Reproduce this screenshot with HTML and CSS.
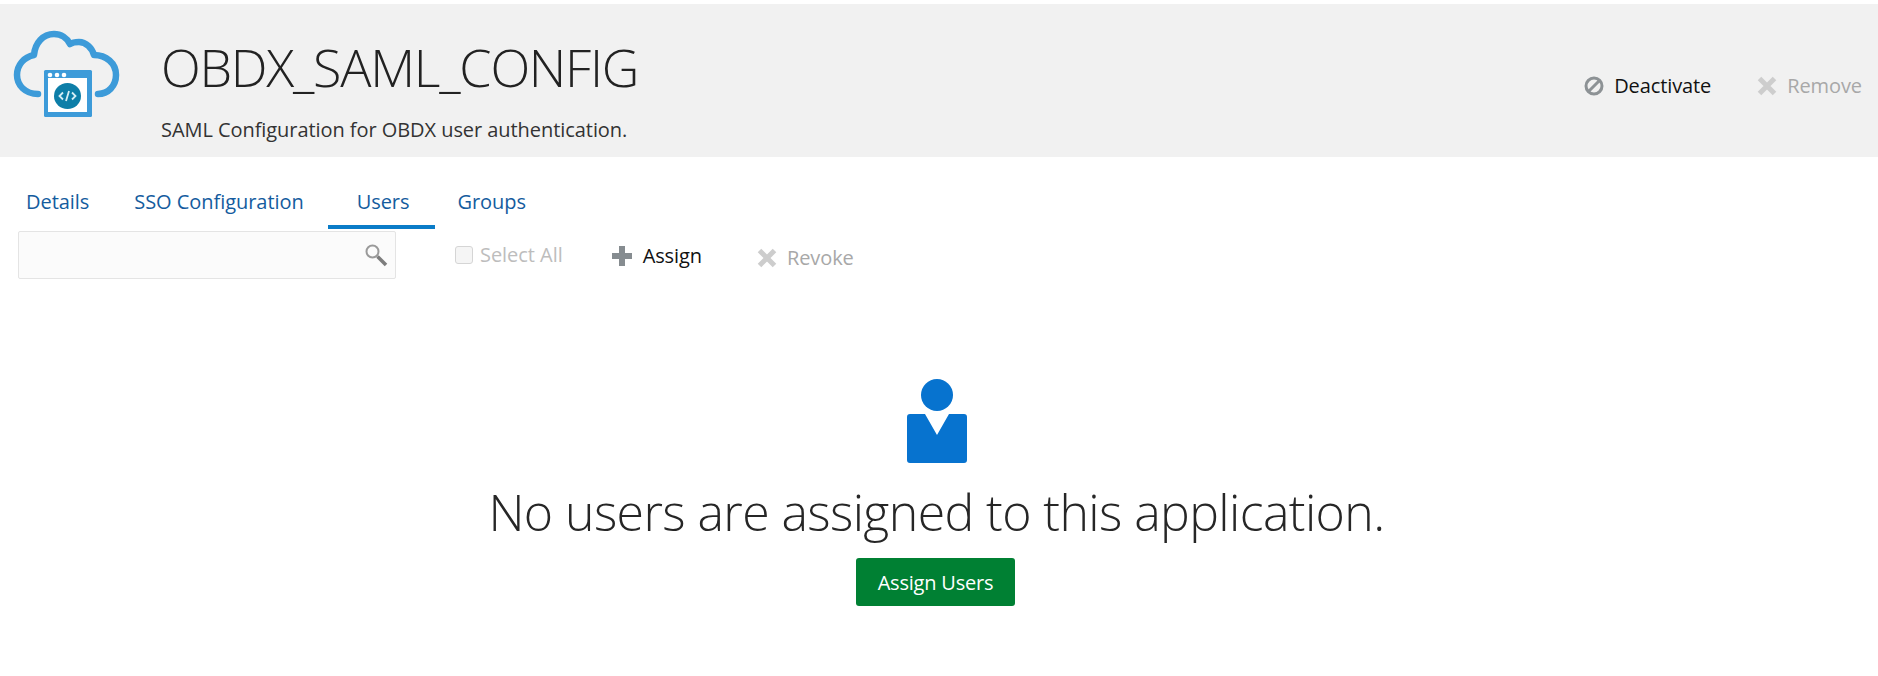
FILE: index.html
```html
<!DOCTYPE html>
<html lang="en">
<head>
<meta charset="utf-8">
<title>OBDX_SAML_CONFIG</title>
<link rel="stylesheet" href="styles.css">
</head>
<body>
<header class="app-header">
  <svg class="app-logo" viewBox="12 30 110 90" width="110" height="90" aria-hidden="true">
    <path class="cloud" d="M38 94C25 94 17 85 17 75C17 65 24 57 34 55C35 43 43 34 54 34C61 34 67 38 70 44C73 42 76 42 79 42C86 42 92 48 94 55C106 55 116 63 116 75C116 86 108 94 98 94"/>
    <rect class="win" x="44" y="70" width="48" height="47" rx="1.500"/>
    <rect class="win-body" x="48" y="78" width="39" height="34"/>
    <circle class="dot" cx="50" cy="75" r="2.300"/><circle class="dot" cx="57" cy="75" r="2.300"/><circle class="dot" cx="64" cy="75" r="2.300"/>
    <ellipse class="badge" cx="67.500" cy="96" rx="13.500" ry="13"/>
    <path class="code" d="M63 92.500l-3.500 3.500 3.500 3.500M72 92.500l3.500 3.500-3.500 3.500M69 91l-3 10"/>
  </svg>
  <div class="app-heading">
    <h1 class="app-title">OBDX_SAML_CONFIG</h1>
    <p class="app-desc">SAML Configuration for OBDX user authentication.</p>
  </div>
  <div class="app-actions">
    <button class="act act-on">
      <svg class="ico" viewBox="0 0 20 20" width="20" height="20" aria-hidden="true"><circle class="ban" cx="10" cy="10" r="8"/><path class="ban" d="M4.500 15.500L15.500 4.500"/></svg>
      Deactivate
    </button>
    <button class="act act-off">
      <svg class="ico" viewBox="0 0 20 20" width="20" height="20" aria-hidden="true"><path class="x" d="M2.500 2.500L17.500 17.500M17.500 2.500L2.500 17.500"/></svg>
      Remove
    </button>
  </div>
</header>

<nav class="tabs">
  <a class="tab">Details</a>
  <a class="tab">SSO Configuration</a>
  <a class="tab tab-active">Users</a>
  <a class="tab">Groups</a>
</nav>

<div class="toolbar">
  <div class="search">
    <svg viewBox="0 0 24 24" width="24" height="24" aria-hidden="true"><circle class="lens" cx="8.500" cy="8.500" r="6"/><path class="handle" d="M13.500 13.500L22 22"/></svg>
  </div>
  <label class="select-all"><span class="check"></span>Select All</label>
  <button class="act act-on tool-assign">
    <svg class="ico" viewBox="0 0 22 22" width="22" height="22" aria-hidden="true"><path class="plus" d="M11 1V21M1 11H21"/></svg>
    Assign
  </button>
  <button class="act act-off tool-revoke">
    <svg class="ico" viewBox="0 0 20 20" width="20" height="20" aria-hidden="true"><path class="x" d="M2.500 2.500L17.500 17.500M17.500 2.500L2.500 17.500"/></svg>
    Revoke
  </button>
</div>

<main class="empty">
  <svg class="person" viewBox="0 0 60 84" width="60" height="84" aria-hidden="true">
    <circle class="fill" cx="30" cy="16" r="16"/>
    <path class="fill" d="M3 35H18L30 56L42 35H57A3 3 0 0 1 60 38V81A3 3 0 0 1 57 84H3A3 3 0 0 1 0 81V38A3 3 0 0 1 3 35Z"/>
  </svg>
  <h2 class="empty-msg">No users are assigned to this application.</h2>
  <button class="primary">Assign Users</button>
</main>
</body>
</html>
```

FILE: styles.css
```css
* { box-sizing: border-box; }
html, body { margin: 0; padding: 0; background: #fff; }
body {
  padding-top: 4px;
  font-family: "Open Sans", "Noto Sans", sans-serif;
  font-size: 20px;
  color: #222;
  height: 676px;
  overflow: hidden;
}
button { font: inherit; background: none; border: 0; padding: 0; }

.app-header {
  height: 153px;
  background: #f1f1f1;
  display: flex;
  align-items: flex-start;
  padding-right: 16px;
}
.app-logo { margin: 26px 0 0 12px; flex: none; }
.app-heading { margin-left: 39px; }
.app-title {
  margin: 31px 0 0;
  font-size: 52px;
  line-height: 64px;
  font-weight: 300;
  letter-spacing: -1.25px;
  color: #222;
}
.app-desc {
  margin: 19px 0 0;
  font-size: 20px;
  line-height: 24px;
  color: #333;
  letter-spacing: -0.06px;
}
.cloud { fill: none; stroke: #3d9bd9; stroke-width: 6.500; stroke-linecap: round; stroke-linejoin: round; }
.win { fill: #3d9bd9; }
.win-body { fill: #fff; }
.dot { fill: #fff; }
.badge { fill: #0d7ea8; }
.code { fill: none; stroke: #d5eef5; stroke-width: 1.800; }

.app-actions {
  margin-left: auto;
  margin-top: 70px;
  display: flex;
  gap: 46px;
}
.act {
  display: inline-flex;
  align-items: center;
  gap: 10px;
  font-size: 20px;
  line-height: 24px;
  letter-spacing: -0.1px;
}
.act-on { color: #111; }
.act-off { color: #a8a8a8; }
.ico { flex: none; }
.ban { fill: none; stroke: #8d9295; stroke-width: 3; }
.x { fill: none; stroke: #cdcdcd; stroke-width: 5; }
.plus { fill: none; stroke: #868c90; stroke-width: 6; }

.tabs {
  display: flex;
  margin-top: 30px;
  height: 42px;
}
.tab {
  display: block;
  padding: 1px 24px 0 23px;
  height: 42px;
  line-height: 28px;
  font-size: 20px;
  letter-spacing: -0.05px;
  color: #145c9e;
}
.tab:first-child { padding: 1px 22px 0 26px; }
.tab-active { padding: 1px 26px 0 29px; border-bottom: 4px solid #0a7cc8; }
.tab-active + .tab { padding-left: 22px; }

.toolbar {
  display: flex;
  align-items: flex-start;
  margin-top: 2px;
  padding-left: 18px;
}
.search {
  width: 378px;
  height: 48px;
  background: #fbfbfb;
  border: 1px solid #e4e4e4;
  border-radius: 2px;
  display: flex;
  align-items: center;
  justify-content: flex-end;
  padding-right: 7px;
}
.lens { fill: none; stroke: #9a9a9a; stroke-width: 2; }
.handle { fill: none; stroke: #7d7d7d; stroke-width: 3.500; }
.select-all {
  display: flex;
  align-items: center;
  gap: 7px;
  margin: 12px 0 0 59px;
  line-height: 24px;
  letter-spacing: -0.05px;
  color: #bdbdbd;
}
.check {
  width: 18px;
  height: 18px;
  background: #f5f5f5;
  border: 1px solid #d5d5d5;
  border-radius: 3px;
}
.tool-assign { margin: 13px 0 0 48px; }
.tool-revoke { margin: 15px 0 0 55px; }

.empty {
  display: flex;
  flex-direction: column;
  align-items: center;
  margin-top: 100px;
  padding-right: 5px;
}
.person { margin-left: 1px; }
.fill { fill: #0773cf; }
.empty-msg {
  margin: 13px 0 0;
  font-size: 50px;
  line-height: 72px;
  font-weight: 300;
  letter-spacing: -0.6px;
  color: #262626;
}
.primary {
  margin-top: 10px;
  margin-right: 2px;
  width: 159px;
  height: 48px;
  background: #008033;
  color: #fff;
  border-radius: 3px;
  font-size: 20px;
  letter-spacing: -0.2px;
}
```
